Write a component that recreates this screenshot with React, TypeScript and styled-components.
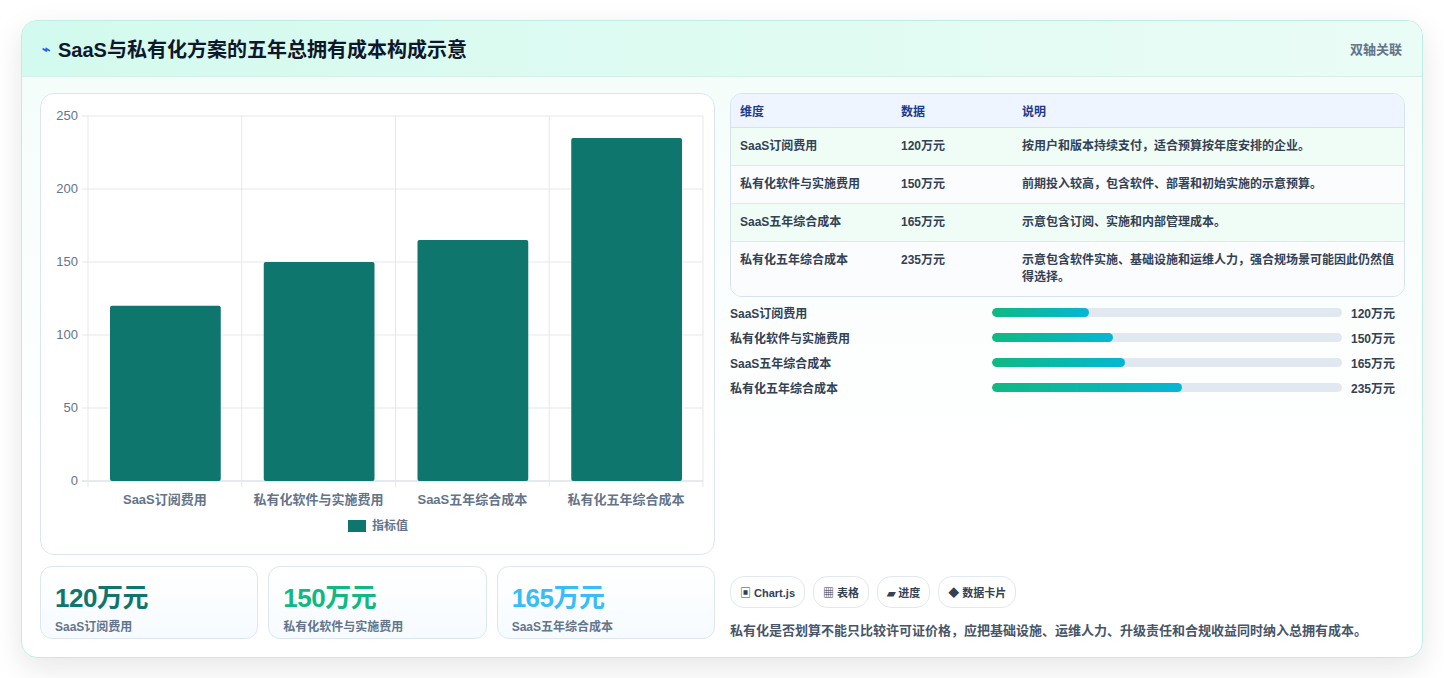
import React from 'react';
import styled, { createGlobalStyle } from 'styled-components';

const GlobalStyle = createGlobalStyle`
  body {
    margin: 0;
    background: #ffffff;
    font-family: "Liberation Sans", "Noto Sans CJK SC", sans-serif;
  }
`;

const Page = styled.div`
  padding: 20px 21px;
  height: 678px;
  box-sizing: border-box;
`;

const Card = styled.div`
  border: 1px solid #bdeee3;
  border-radius: 16px;
  overflow: hidden;
  background: linear-gradient(180deg, #f3fdf9 0%, #ffffff 70%);
  box-shadow: 0 10px 30px rgba(15, 23, 42, 0.1);
  height: 638px;
  box-sizing: border-box;
  display: flex;
  flex-direction: column;
`;

const Header = styled.div`
  height: 55px;
  display: flex;
  align-items: center;
  justify-content: space-between;
  padding: 0 20px;
  background: linear-gradient(90deg, #d3faee 0%, #eafcf6 100%);
  border-bottom: 1px solid #d6efe9;
`;

const Title = styled.h1`
  margin: 0;
  font-size: 20px;
  font-weight: 700;
  color: #0f172a;
  display: flex;
  align-items: center;
  gap: 8px;
`;

const Bolt = styled.span`
  color: #2563eb;
  font-size: 14px;
`;

const Tag = styled.span`
  font-size: 13px;
  color: #64748b;
  font-weight: 600;
`;

const Body = styled.div`
  flex: 1;
  display: grid;
  grid-template-columns: 675px 675px;
  gap: 15px;
  padding: 16px 18px 18px;
`;

const Column = styled.div`
  display: flex;
  flex-direction: column;
  gap: 11px;
`;

const ChartCard = styled.div`
  height: 462px;
  box-sizing: border-box;
  border: 1px solid #dde6f0;
  border-radius: 14px;
  background: #fff;
`;

const Kpis = styled.div`
  display: grid;
  grid-template-columns: repeat(3, 1fr);
  gap: 10px;
`;

const Kpi = styled.div`
  height: 73px;
  box-sizing: border-box;
  border: 1px solid #dde6f0;
  border-radius: 12px;
  background: linear-gradient(180deg, #ffffff, #f6fbff);
  padding: 10px 14px;
`;

const KpiValue = styled.div<{ $c: string }>`
  font-size: 26px;
  font-weight: 700;
  color: ${p => p.$c};
  letter-spacing: -0.5px;
`;

const KpiLabel = styled.div`
  font-size: 12px;
  color: #64748b;
  font-weight: 600;
  margin-top: 3px;
`;

const Table = styled.table`
  width: 100%;
  border-collapse: separate;
  border-spacing: 0;
  border: 1px solid #d7e2ee;
  border-radius: 12px;
  overflow: hidden;
  font-size: 12px;
  font-weight: 700;
  color: #334155;
`;

const Th = styled.th<{ $w?: string }>`
  text-align: left;
  background: #eef5ff;
  color: #1e3a8a;
  height: 33px;
  padding: 0 9px;
  width: ${p => p.$w || 'auto'};
  border-bottom: 1px solid #d7e2ee;
`;

const Tr = styled.tr<{ $alt: boolean }>`
  background: ${p => (p.$alt ? '#f0fdf7' : '#fafcfe')};
`;

const Td = styled.td<{ $last: boolean }>`
  padding: 10px 9px;
  vertical-align: top;
  line-height: 17px;
  border-bottom: ${p => (p.$last ? 'none' : '1px solid #e2e8f0')};
`;

const Bars = styled.div`
  margin-top: 7px;
  display: flex;
  flex-direction: column;
  gap: 8px;
`;

const BarRow = styled.div`
  display: grid;
  grid-template-columns: 253px 350px 1fr;
  gap: 9px;
  align-items: center;
  font-size: 12px;
  font-weight: 700;
  color: #334155;
  height: 17px;
`;

const Track = styled.div`
  height: 9px;
  border-radius: 5px;
  background: #e2e8f0;
  overflow: hidden;
`;

const Fill = styled.div`
  height: 100%;
  border-radius: 5px;
  background: linear-gradient(90deg, #10b981, #06b6d4);
`;

const Spacer = styled.div`
  flex: 1;
`;

const Chips = styled.div`
  display: flex;
  gap: 8px;
`;

const Chip = styled.span`
  font-size: 11px;
  font-weight: 700;
  color: #334155;
  border: 1px solid #e2e8f0;
  border-radius: 14px;
  padding: 7px 9px;
  background: #fff;
`;

const Note = styled.p`
  margin: 12px 0 0;
  font-size: 13px;
  color: #475569;
  font-weight: 600;
`;

const items = [
  { name: 'SaaS订阅费用', v: 120, desc: '按用户和版本持续支付，适合预算按年度安排的企业。' },
  { name: '私有化软件与实施费用', v: 150, desc: '前期投入较高，包含软件、部署和初始实施的示意预算。' },
  { name: 'SaaS五年综合成本', v: 165, desc: '示意包含订阅、实施和内部管理成本。' },
  { name: '私有化五年综合成本', v: 235, desc: '示意包含软件实施、基础设施和运维人力，强合规场景可能因此仍然值得选择。' },
];

const Chart: React.FC = () => {
  const x0 = 47, x1 = 662, y0 = 22, y1 = 387;
  const slot = (x1 - x0) / 4;
  const yOf = (v: number) => y1 - (v / 250) * (y1 - y0);
  return (
    <svg width="673" height="460" fontFamily='"Liberation Sans","Noto Sans CJK SC",sans-serif'>
      {[0, 50, 100, 150, 200, 250].map(t => (
        <g key={t}>
          <line x1={x0 - 6} x2={x1} y1={yOf(t)} y2={yOf(t)} stroke={t === 0 ? '#cbd5e1' : '#e5e7eb'} />
          <text x={x0 - 10} y={yOf(t) + 4} fontSize="13" fill="#64748b" textAnchor="end">{t}</text>
        </g>
      ))}
      {[0, 1, 2, 3, 4].map(i => (
        <line key={i} x1={x0 + i * slot} x2={x0 + i * slot} y1={y0} y2={y1 + 6} stroke="#e5e7eb" />
      ))}
      {items.map((it, i) => (
        <g key={it.name}>
          <rect x={x0 + i * slot + 22} y={yOf(it.v)} width={slot - 43} height={y1 - yOf(it.v)} rx="2" fill="#0f766e" />
          <text x={x0 + i * slot + slot / 2} y={410} fontSize="13" fontWeight="700" fill="#64748b" textAnchor="middle">{it.name}</text>
        </g>
      ))}
      <rect x="307" y="426" width="18" height="12" fill="#0f766e" />
      <text x="331" y="436" fontSize="12" fontWeight="700" fill="#64748b">指标值</text>
    </svg>
  );
};

const App: React.FC = () => (
  <Page>
    <GlobalStyle />
    <Card>
      <Header>
        <Title><Bolt>⌁</Bolt>SaaS与私有化方案的五年总拥有成本构成示意</Title>
        <Tag>双轴关联</Tag>
      </Header>
      <Body>
        <Column>
          <ChartCard><Chart /></ChartCard>
          <Kpis>
            <Kpi><KpiValue $c="#0f766e">120万元</KpiValue><KpiLabel>SaaS订阅费用</KpiLabel></Kpi>
            <Kpi><KpiValue $c="#10b981">150万元</KpiValue><KpiLabel>私有化软件与实施费用</KpiLabel></Kpi>
            <Kpi><KpiValue $c="#38bdf8">165万元</KpiValue><KpiLabel>SaaS五年综合成本</KpiLabel></Kpi>
          </Kpis>
        </Column>
        <Column style={{ gap: 0 }}>
          <Table>
            <thead>
              <tr><Th $w="143px">维度</Th><Th $w="103px">数据</Th><Th>说明</Th></tr>
            </thead>
            <tbody>
              {items.map((it, i) => (
                <Tr key={it.name} $alt={i % 2 === 0}>
                  <Td $last={i === 3}>{it.name}</Td>
                  <Td $last={i === 3}>{it.v}万元</Td>
                  <Td $last={i === 3}>{it.desc}</Td>
                </Tr>
              ))}
            </tbody>
          </Table>
          <Bars>
            {items.map(it => (
              <BarRow key={it.name}>
                <span>{it.name}</span>
                <Track><Fill style={{ width: `${(it.v / 433) * 100}%` }} /></Track>
                <span>{it.v}万元</span>
              </BarRow>
            ))}
          </Bars>
          <Spacer />
          <Chips>
            <Chip>▣ Chart.js</Chip>
            <Chip>▦ 表格</Chip>
            <Chip>▰ 进度</Chip>
            <Chip>◆ 数据卡片</Chip>
          </Chips>
          <Note>私有化是否划算不能只比较许可证价格，应把基础设施、运维人力、升级责任和合规收益同时纳入总拥有成本。</Note>
        </Column>
      </Body>
    </Card>
  </Page>
);

export default App;
